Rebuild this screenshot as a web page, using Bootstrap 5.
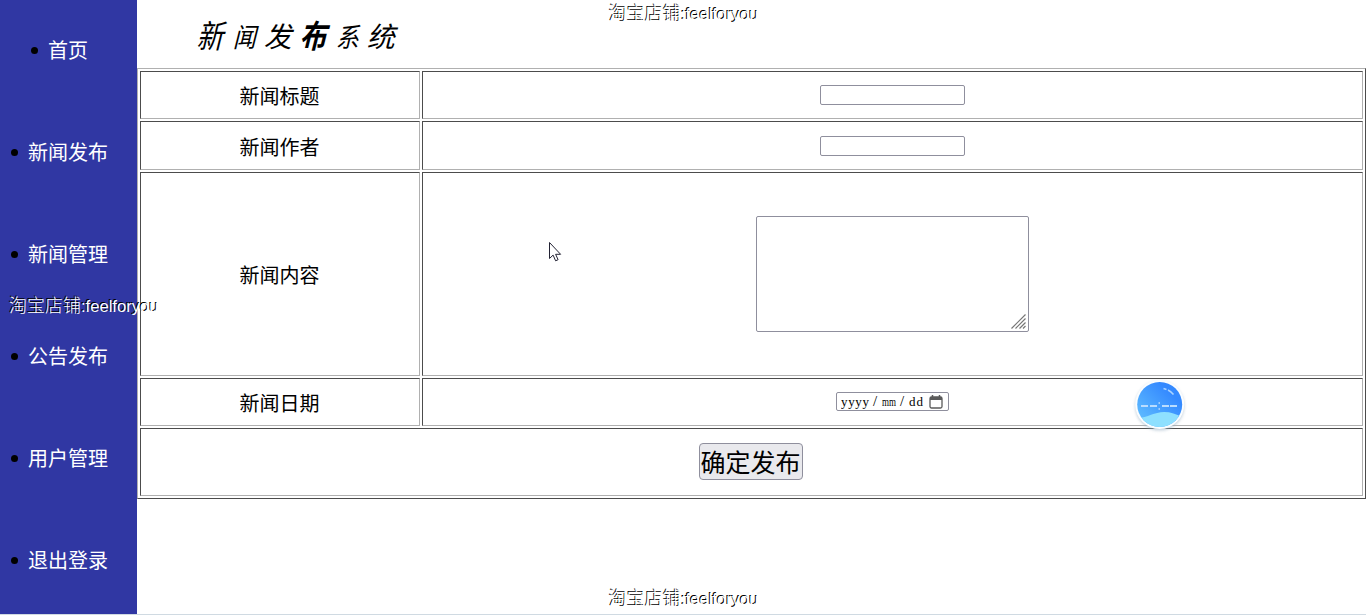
<!DOCTYPE html>
<html lang="zh-CN">
<head>
<meta charset="utf-8">
<title>新闻发布系统</title>
<meta name="viewport" content="width=device-width, initial-scale=1">
<link href="https://cdn.jsdelivr.net/npm/bootstrap@5.3.0/dist/css/bootstrap.min.css" rel="stylesheet">
<style>
body{font-family:"Liberation Sans","Noto Sans CJK SC",sans-serif;color:#000;background:#fff;height:615px}
.shell{height:614px}
.side{width:137px;background:#3037a3;padding-top:24px}
.side li{height:102px;line-height:51px;font-size:20px;white-space:nowrap;padding-right:18px}
.side a{color:#fff;text-decoration:none;font-family:"Noto Sans CJK SC",sans-serif;font-weight:400}
.dot{width:7px;height:7px;border-radius:50%;background:#000;margin:23px 10px 0 0}
.brand-title{height:68px;padding:15px 0 0 60px;font:400 28px/40px "Noto Sans CJK SC",sans-serif;margin:0}
.brand-title span{display:inline-block;width:34.2px;transform:skewX(-14deg)}
.brand-title .tall{transform:skewX(-14deg) scale(.95,1.15)}
.brand-title .slim{transform:skewX(-14deg) scale(.82,.95)}
.news-form{border-collapse:separate;border-spacing:2px;border:1px solid;border-color:#b0b0b0 #4c4c4c #4c4c4c #b0b0b0;width:1229px;height:431px;table-layout:fixed}
.news-form td{border:1px solid;border-color:#4c4c4c #b0b0b0 #b0b0b0 #4c4c4c;padding:0;text-align:center;vertical-align:middle}
.news-form .cell-name{font:400 20px/24px "Noto Sans CJK SC",sans-serif;padding:2px 1px 0 0}
.field{border:1px solid #8f8f9d;border-radius:2px;background:#fff;padding:0;outline:0}
.line-field{width:145px;height:20px;display:block;margin:0 auto}
.area-wrap{width:273px;height:116px}
.area-wrap textarea{width:100%;height:100%;resize:none;display:block}
.grip{right:3px;bottom:3px}
.news-form .date-cell{padding-bottom:1px}
.date-field{width:113px;height:19px;padding-left:4px}
.news-form .send-cell{padding:0 2px 2px 0}
.send{display:block;margin:0 auto;font:400 25px/33px "Noto Sans CJK SC",sans-serif;border:1px solid #8f8f9d;border-radius:4px;background:#e9e9ed;width:104px;height:37px;padding:0;color:#000;white-space:nowrap}
.stamp{font:300 18px/24px "Noto Sans CJK SC",sans-serif;color:#fff;text-shadow:-1px -1px 0 #000;white-space:nowrap;z-index:5}
.stamp span{font:16.6px "Liberation Sans",sans-serif}
.edge{height:1px;background:#d0dae2}
</style>
</head>
<body class="position-relative overflow-hidden">
<div class="shell d-flex">
  <nav class="side flex-shrink-0">
    <ul class="list-unstyled m-0">
      <li class="d-flex justify-content-center"><i class="dot"></i><a href="#">首页</a></li>
      <li class="d-flex justify-content-center"><i class="dot"></i><a href="#">新闻发布</a></li>
      <li class="d-flex justify-content-center"><i class="dot"></i><a href="#">新闻管理</a></li>
      <li class="d-flex justify-content-center"><i class="dot"></i><a href="#">公告发布</a></li>
      <li class="d-flex justify-content-center"><i class="dot"></i><a href="#">用户管理</a></li>
      <li class="d-flex justify-content-center"><i class="dot"></i><a href="#">退出登录</a></li>
    </ul>
  </nav>
  <main class="flex-grow-1">
    <h1 class="brand-title d-flex"><span class="tall">新</span><span class="slim">闻</span><span>发</span><span class="tall fw-bold">布</span><span class="slim">系</span><span>统</span></h1>
    <table class="news-form">
      <colgroup><col style="width:280px"><col></colgroup>
      <tr style="height:48px"><td class="cell-name">新闻标题</td><td><input class="field line-field" type="text" aria-label="新闻标题"></td></tr>
      <tr style="height:49px"><td class="cell-name">新闻作者</td><td><input class="field line-field" type="text" aria-label="新闻作者"></td></tr>
      <tr style="height:204px"><td class="cell-name">新闻内容</td><td>
        <div class="area-wrap position-relative mx-auto"><textarea class="field" aria-label="新闻内容"></textarea>
          <svg class="grip position-absolute" width="15" height="15" viewBox="0 0 15 15" stroke="#777" stroke-width="1.2"><path d="M.5 14.5 14.5.5M4.500 14.5l10-10M8.500 14.5l6-6M12 14.500l2.500-2.500"/></svg>
        </div></td></tr>
      <tr style="height:48px"><td class="cell-name">新闻日期</td><td class="date-cell">
        <div class="field date-field d-flex align-items-center mx-auto"><svg width="84" height="17"><g font-family="Liberation Serif" font-size="13"><text x="0" y="13" textLength="28">yyyy</text><text x="32" y="13" font-size="15">/</text><text x="41" y="13" textLength="14" lengthAdjust="spacingAndGlyphs">mm</text><text x="59" y="13" font-size="15">/</text><text x="68" y="13" textLength="14">dd</text></g></svg>
          <svg width="14" height="14" viewBox="0 0 14 14" style="margin-left:4px"><path d="M3.500 0v3M10.500 0v3" stroke="#5b5b5b" stroke-width="1.500"/><rect x="1" y="2" width="12" height="11" rx="1.500" fill="none" stroke="#5b5b5b" stroke-width="1.300"/><path d="M1 2h12v3H1z" fill="#5b5b5b"/></svg></div></td></tr>
      <tr style="height:68px"><td colspan="2" class="send-cell"><button class="send" type="button">确定发布</button></td></tr>
    </table>
  </main>
</div>
<div class="edge"></div>

<div class="stamp position-absolute" style="left:609px;top:0">淘宝店铺<span>:feelforyou</span></div>
<div class="stamp position-absolute" style="left:9px;top:292px">淘宝店铺<span>:feelforyou</span></div>
<div class="stamp position-absolute" style="left:609px;top:585px">淘宝店铺<span>:feelforyou</span></div>

<!-- floating assistant ball -->
<svg class="position-absolute" style="left:1130px;top:375px" width="60" height="62" viewBox="0 0 60 62">
  <defs>
    <linearGradient id="sky" x1="0" y1="1" x2="1" y2="0"><stop offset="0" stop-color="#66c5ff"/><stop offset=".75" stop-color="#3489ff"/></linearGradient>
    <clipPath id="ball"><circle cx="29.700" cy="29.500" r="22.500"/></clipPath>
    <filter id="soft" x="-20%" y="-20%" width="140%" height="140%"><feGaussianBlur stdDeviation="1.500"/></filter>
  </defs>
  <circle cx="29.700" cy="31" r="24.500" fill="#9fb4c6" opacity=".6" filter="url(#soft)"/>
  <circle cx="29.700" cy="29.500" r="24.500" fill="#fafdff"/>
  <circle cx="29.700" cy="29.500" r="22.500" fill="url(#sky)"/>
  <path clip-path="url(#ball)" d="M6 43C18 43 24 37 34 37c7 0 12 2 18 5v14H6z" fill="#8ee0ff"/>
  <path d="M11 31h7m2 0h7m5 0h7m1 0h7" stroke="#b9dcff" stroke-width="2"/>
  <path d="M28.500 28h1.500m-1.500 6h1.500" stroke="#b9dcff" stroke-width="1.500"/>
  <path d="M33.500 13.500l3 1m1.500.5c2 1 4 2.500 5.500 4.500" stroke="#a9d3ff" stroke-width="1.500" fill="none"/>
</svg>
<!-- pointer -->
<svg class="position-absolute" style="left:549px;top:242px" width="13" height="20" viewBox="0 0 13 20"><path d="M.5.500v16l3.600-3.400 2.500 5.700 2.500-1.100-2.500-5.400h5z" fill="#fff" stroke="#223" stroke-width="1"/></svg>
</body>
</html>
